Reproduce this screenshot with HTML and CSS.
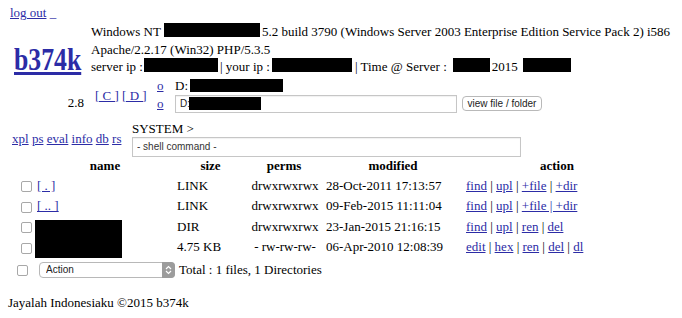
FILE: index.html
```html
<!DOCTYPE html>
<html>
<head>
<meta charset="utf-8">
<title>b374k</title>
<link rel="stylesheet" href="styles.css">
</head>
<body>
<div class="logout"><a href="#">log out</a> <span class="us">_</span></div>

<div class="head">
  <div class="logo"><a href="#">b374k</a></div>
  <div class="info">
    <div>Windows NT<span class="red r1"></span>5.2 build 3790 (Windows Server 2003 Enterprise Edition Service Pack 2) i586</div>
    <div>Apache/2.2.17 (Win32) PHP/5.3.5</div>
    <div>server ip :<span class="red r2"></span>| your ip :<span class="red r3"></span>| Time @ Server :<span class="red r4"></span>2015<span class="red r5"></span></div>
  </div>
</div>

<div class="drive">
  <div class="ver">2.8</div>
  <div class="drives"><a href="#">[ C ]</a> <a href="#">[ D ]</a></div>
  <div class="paths">
    <a href="#" class="o">o</a>
    <div class="p1">D:<span class="red r6"></span></div>
    <a href="#" class="o">o</a>
    <div class="p2">
      <span class="field">
        <input class="path" type="text" value="D:">
        <span class="red r7"></span>
      </span>
      <button class="btn">view file / folder</button>
    </div>
  </div>
</div>

<div class="cmd">
  <div class="tools"><a href="#">xpl</a> <a href="#">ps</a> <a href="#">eval</a> <a href="#">info</a> <a href="#">db</a> <a href="#">rs</a></div>
  <div class="shell">
    <div class="sys">SYSTEM &gt;</div>
    <input class="shellin" type="text" value="- shell command -">
  </div>
</div>

<table class="files">
  <colgroup>
    <col class="c-cb"><col class="c-name"><col class="c-size"><col class="c-perm"><col class="c-mod"><col class="c-act">
  </colgroup>
  <thead>
    <tr><th></th><th>name</th><th>size</th><th>perms</th><th>modified</th><th>action</th></tr>
  </thead>
  <tbody>
    <tr>
      <td><input type="checkbox" class="cb"></td>
      <td class="nm"><a href="#">[ . ]</a></td>
      <td class="sz">LINK</td>
      <td class="pm">drwxrwxrwx</td>
      <td class="md">28-Oct-2011 17:13:57</td>
      <td class="ac"><a href="#">find</a> | <a href="#">upl</a> | <a href="#">+file</a> | <a href="#">+dir</a></td>
    </tr>
    <tr>
      <td><input type="checkbox" class="cb"></td>
      <td class="nm"><a href="#">[ .. ]</a></td>
      <td class="sz">LINK</td>
      <td class="pm">drwxrwxrwx</td>
      <td class="md">09-Feb-2015 11:11:04</td>
      <td class="ac"><a href="#">find</a> | <a href="#">upl</a> | <a href="#">+file | +dir</a></td>
    </tr>
    <tr>
      <td><input type="checkbox" class="cb"></td>
      <td class="redcell"><div class="blk blk-top"></div></td>
      <td class="sz">DIR</td>
      <td class="pm">drwxrwxrwx</td>
      <td class="md">23-Jan-2015 21:16:15</td>
      <td class="ac"><a href="#">find</a> | <a href="#">upl</a> | <a href="#">ren</a> | <a href="#">del</a></td>
    </tr>
    <tr>
      <td><input type="checkbox" class="cb"></td>
      <td class="redcell"><div class="blk blk-bot"></div></td>
      <td class="sz">4.75 KB</td>
      <td class="pm">- rw-rw-rw-</td>
      <td class="md">06-Apr-2010 12:08:39</td>
      <td class="ac"><a href="#">edit</a> | <a href="#">hex</a> | <a href="#">ren</a> | <a href="#">del</a> | <a href="#">dl</a></td>
    </tr>
    <tr>
      <td colspan="6" class="lastcell">
        <div class="lastrow">
          <input type="checkbox" class="cb cb-all">
          <span class="sel">
            <select class="action"><option>Action</option></select>
            <span class="arrows"><svg width="7" height="10" viewBox="0 0 7 10"><path d="M1 4 L3.5 1.5 L6 4 M1 6 L3.5 8.5 L6 6" fill="none" stroke="#fff" stroke-width="1.2"/></svg></span>
          </span>
          <span class="total">Total : 1 files, 1 Directories</span>
        </div>
      </td>
    </tr>
  </tbody>
</table>

<div class="footer">Jayalah Indonesiaku ©2015 b374k</div>
</body>
</html>
```

FILE: styles.css
```css
* { box-sizing: border-box; }
body {
  margin: 5px 8px 0;
  font-family: "Liberation Serif", "Times New Roman", serif;
  font-size: 13px;
  line-height: 15px;
  color: #000;
  background: #fff;
}
a { color: #2c2ca6; text-decoration: underline; }

.logout { padding-left: 2px; height: 15px; }
.us { color: #2c2ca6; }

.head { display: flex; align-items: flex-end; margin-top: 3px; }
.logo { width: 83px; padding-left: 6px; padding-bottom: 1px; }
.logo a {
  display: inline-block;
  font-weight: bold;
  font-size: 31px;
  line-height: 30px;
  transform: scaleX(0.83);
  transform-origin: left center;
}
.info { line-height: 17.5px; white-space: nowrap; }
.red { display: inline-block; background: #000; height: 14px; vertical-align: -1px; }
.r1 { width: 96px; margin: 0 2px 0 3px; }
.r2 { width: 74px; margin: 0 2px 0 1px; }
.r3 { width: 80px; margin: 0 3px 0 2px; }
.r4 { width: 37px; margin: 0 2px 0 6px; }
.r5 { width: 48px; margin-left: 5px; }

.drive { display: flex; margin-top: 2px; line-height: 16px; }
.ver { width: 76px; text-align: right; align-self: flex-end; padding-bottom: 3px; }
.drives { align-self: center; margin-left: 11px; width: 62px; }
.paths { display: grid; grid-template-columns: 18px auto; grid-template-rows: 16px 20px; align-items: center; }
.p1 { white-space: nowrap; }
.r6 { width: 93px; height: 13px; margin-left: 2px; vertical-align: -2px; }
.p2 { display: flex; align-items: center; }
.field { position: relative; display: inline-block; }
.path {
  width: 282px; height: 18px;
  border: 1px solid #c6c6c6;
  box-shadow: inset 0 1px 1px rgba(0,0,0,0.06);
  font-family: "Liberation Sans", Arial, sans-serif;
  font-size: 10px;
  padding: 0 4px;
  color: #222;
  display: block;
}
.r7 { position: absolute; left: 14px; top: 2px; width: 72px; height: 13px; }
.btn {
  margin-left: 5px;
  height: 15px;
  width: 80px;
  padding: 0;
  border: 1px solid #b9b9b9;
  border-radius: 4px;
  background: #fff;
  font-family: "Liberation Sans", Arial, sans-serif;
  font-size: 10px;
  line-height: 13px;
  color: #222;
}

.cmd { display: flex; align-items: center; margin-top: 7px; }
.tools { width: 124px; padding-left: 4px; line-height: 16px; }
.sys { line-height: 16px; }
.shellin {
  display: block;
  width: 389px; height: 20px;
  border: 1px solid #c6c6c6;
  box-shadow: inset 0 1px 1px rgba(0,0,0,0.06);
  font-family: "Liberation Sans", Arial, sans-serif;
  font-size: 10px;
  padding: 0 4px;
  color: #333;
}

.files { border-collapse: collapse; table-layout: fixed; width: 642px; }
.c-cb { width: 27px; }
.c-name { width: 140px; }
.c-size { width: 71px; }
.c-perm { width: 76px; }
.c-mod { width: 142px; }
.c-act { width: 186px; }
.files th { padding: 1.5px 0; line-height: 16px; text-align: center; font-weight: bold; }
.files td { padding: 2.25px 0; line-height: 16px; white-space: nowrap; text-align: left; }
.nm { padding-left: 2px !important; }
.sz { padding-left: 2px !important; }
.pm { text-align: center !important; padding-left: 2px !important; }
.md { padding-left: 4px !important; }
.ac { padding-left: 2px !important; }
.files td.redcell { padding: 0; }
.blk { background: #000; width: 87px; }
.blk-top { margin-top: 3px; height: 17.5px; }
.blk-bot { height: 20.5px; }

.cb {
  -webkit-appearance: none;
  appearance: none;
  width: 11px; height: 11px;
  border: 1px solid #a8a8a8;
  border-radius: 2px;
  background: #fff;
  margin: 0 0 0 13px;
  vertical-align: middle;
}
.files td.lastcell { padding: 4px 0 0; }
.lastrow { display: flex; align-items: center; height: 16px; }
.cb-all { margin: 2px 0 0 9px; }
.sel { position: relative; display: inline-block; width: 136px; height: 16px; margin-left: 11px; }
.action {
  -webkit-appearance: none;
  appearance: none;
  width: 136px; height: 16px;
  border: 1px solid #b8b8b8;
  border-radius: 4px;
  background: #fff;
  font-family: "Liberation Sans", Arial, sans-serif;
  font-size: 10px;
  padding: 0 0 0 6px;
  color: #222;
  display: block;
}
.arrows {
  position: absolute; right: 0; top: 0;
  width: 13px; height: 16px;
  background: #9c9c9c;
  border-radius: 0 4px 4px 0;
  display: flex; align-items: center; justify-content: center;
}
.arrows svg { display: block; }
.total { margin-left: 4px; line-height: 16px; }

.footer { margin-top: 17px; line-height: 16px; }
```
